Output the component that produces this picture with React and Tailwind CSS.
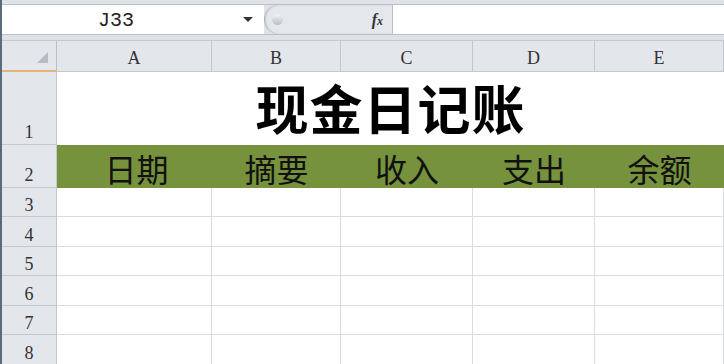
import React from 'react';

const cols = ['A', 'B', 'C', 'D', 'E'];
const heads = ['日期', '摘要', '收入', '支出', '余额'];
const rowHeights = ['h-[29px]', 'h-[30px]', 'h-[29px]', 'h-[30px]', 'h-[29px]', 'h-[30px]'];

const hdr = { fontFamily: '"Liberation Serif", "DejaVu Serif", serif' };
const mono = { fontFamily: '"Liberation Mono", "DejaVu Sans Mono", monospace' };
const cjk = { fontFamily: '"Noto Sans CJK SC", "Noto Sans", sans-serif' };

function App() {
  return (
    <div className="w-[724px] h-[364px] overflow-hidden bg-white border-l-2 border-[#5b6b7e]">
      {/* formula bar */}
      <div className="h-[41px] bg-[#dfe3e8] pt-[4px] border-b border-[#c4cad2]">
        <div className="flex h-[31px] border-y border-[#b9c0c9]">
          <div className="relative flex w-[262px] items-center bg-white">
            <span className="ml-[96px] pt-[3px] text-[20px] text-[#222]" style={mono}>J33</span>
            <span className="absolute left-[241px] top-[12px] h-0 w-0 border-x-[5px] border-t-[5px] border-x-transparent border-t-[#333]" />
          </div>
          <div className="flex w-[128px] items-center rounded-l-full border-l border-[#aab1ba] bg-[#e4e7eb] shadow-[inset_1px_0_2px_rgba(0,0,0,0.1)]">
            <span className="ml-[7px] h-[11px] w-[11px] rounded-full bg-gradient-to-b from-[#f4f5f6] to-[#b9bec4]" />
            <span className="ml-auto mr-[9px] text-[16px] font-bold italic text-[#333]" style={{ fontFamily: '"Liberation Serif", serif' }}>
              f<span className="text-[12px]">x</span>
            </span>
          </div>
          <div className="flex-1 border-l border-[#b9c0c9] bg-white" />
        </div>
      </div>

      {/* sheet */}
      <div className="grid grid-cols-[55px_155px_129px_132px_122px_129px]">
        {/* column headers */}
        <div className="relative h-[31px] border-r border-b-2 border-r-[#b9bfc7] border-b-[#e3b57a] bg-[#e3e7ec]">
          <span className="absolute right-[8px] bottom-[7px] h-0 w-0 border-b-[11px] border-l-[11px] border-b-[#b7bcc3] border-l-transparent" />
        </div>
        {cols.map((c) => (
          <div key={c} className="flex h-[31px] items-center justify-center border-r border-b border-[#c3c8cf] bg-[#e3e7ec] pt-[5px] text-[18px] text-[#333]" style={hdr}>
            {c}
          </div>
        ))}

        {/* row 1 */}
        <div className="flex h-[73px] items-end justify-center border-r border-b border-[#c3c8cf] bg-[#e3e7ec] text-[18px] leading-[24px] text-[#333]" style={hdr}>1</div>
        <div className="col-span-5 flex h-[73px] items-center justify-center bg-white pb-[2px] text-[53px] font-bold tracking-[1px] text-black" style={cjk}>
          现金日记账
        </div>

        {/* row 2 */}
        <div className="flex h-[43px] items-end justify-center border-r border-b border-[#c3c8cf] bg-[#e3e7ec] text-[18px] leading-[24px] text-[#333]" style={hdr}>2</div>
        {heads.map((h, i) => (
          <div key={h} className={`flex h-[43px] items-end justify-center bg-[#77923c] text-[32px] leading-[40px] text-[#111] ${i === 0 ? 'pl-[4px]' : ''}`} style={cjk}>
            {h}
          </div>
        ))}

        {/* rows 3-8 */}
        {rowHeights.map((rh, i) => (
          <React.Fragment key={i}>
            <div className={`flex ${rh} items-end justify-center border-r border-b border-[#c3c8cf] bg-[#e3e7ec] text-[18px] leading-[21px] text-[#333]`} style={hdr}>
              {i + 3}
            </div>
            {cols.map((c) => (
              <div key={c} className={`${rh} border-r border-b border-[#dadcdd] bg-white`} />
            ))}
          </React.Fragment>
        ))}
      </div>
    </div>
  );
}

export default App;
